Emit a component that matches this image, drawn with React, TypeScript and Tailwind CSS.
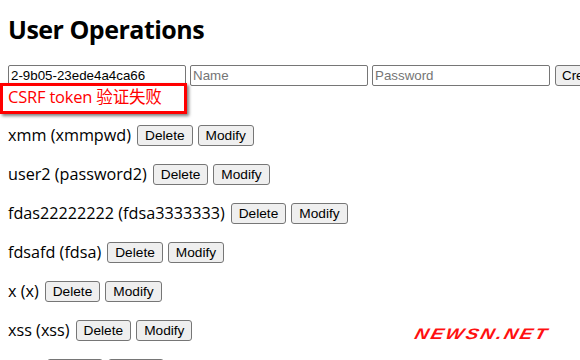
import React from "react";

const rows = [
  "xmm (xmmpwd)",
  "user2 (password2)",
  "fdas22222222 (fdsa3333333)",
  "fdsafd (fdsa)",
  "x (x)",
  "xss (xss)",
  "",
];

function Btn({ children }: { children: React.ReactNode }) {
  return (
    <button className="shrink-0 h-[21px] px-[7px] bg-[#efefef] border border-[#767676] rounded-[3px] text-[13.7px] leading-[16px] text-black [font-family:'Liberation_Sans',Arial,sans-serif]">
      {children}
    </button>
  );
}

export default function App() {
  return (
    <div className="relative w-[580px] h-[360px] overflow-hidden bg-white text-black [font-family:'Open_Sans','Noto_Sans',sans-serif]">
      <div className="px-[8px] pt-[11px]">
        <h1 className="text-[25px] leading-[36px] font-bold tracking-[-0.5px] [font-family:'Open_Sans',sans-serif]">
          User Operations
        </h1>
        <div className="mt-[18px] flex items-center gap-[4px] whitespace-nowrap">
          {["2-9b05-23ede4a4ca66", "", ""].map((v, i) => (
            <input
              key={i}
              defaultValue={v}
              placeholder={i === 1 ? "Name" : i === 2 ? "Password" : ""}
              className="shrink-0 w-[178px] h-[21px] px-[2px] border border-[#767676] rounded-[2px] text-[13.33px] text-black placeholder:text-[#757575] [font-family:'Liberation_Sans',Arial,sans-serif] outline-none"
            />
          ))}
          <button className="shrink-0 ml-[1px] h-[21px] px-[6px] bg-[#efefef] border border-[#767676] rounded-[3px] text-[13.33px] [font-family:'Liberation_Sans',Arial,sans-serif]">
            Create
          </button>
        </div>
        <div className="h-[22px] flex items-center text-[16.5px] text-[#ff0000] [font-family:'Open_Sans','Noto_Sans_CJK_SC',sans-serif] tracking-[-0.2px]">
          CSRF token 验证失败
        </div>
        <div className="flex flex-col">
          {rows.map((r, i) => (
            <div key={i} className="mt-[16px] h-[23px] flex items-center gap-[5px] whitespace-nowrap text-[16.2px]">
              {r && <span className="mr-[1px]">{r}</span>}
              {r === "" && <span className="w-[34px]" />}
              <Btn>Delete</Btn>
              <Btn>Modify</Btn>
            </div>
          ))}
        </div>
      </div>
      <div className="absolute left-0 top-[83px] w-[187px] h-[31px] border-[3px] border-[#ff0000] shadow-[2px_2px_3px_rgba(0,0,0,0.5)]" />
      <div className="absolute left-[415px] top-[324px] text-[#ff1010] text-[19px] leading-[20px] font-bold italic tracking-[2.2px] [font-family:'Liberation_Sans',sans-serif] -skew-x-12 scale-y-[0.8]">
        NEWSN.NET
      </div>
    </div>
  );
}
